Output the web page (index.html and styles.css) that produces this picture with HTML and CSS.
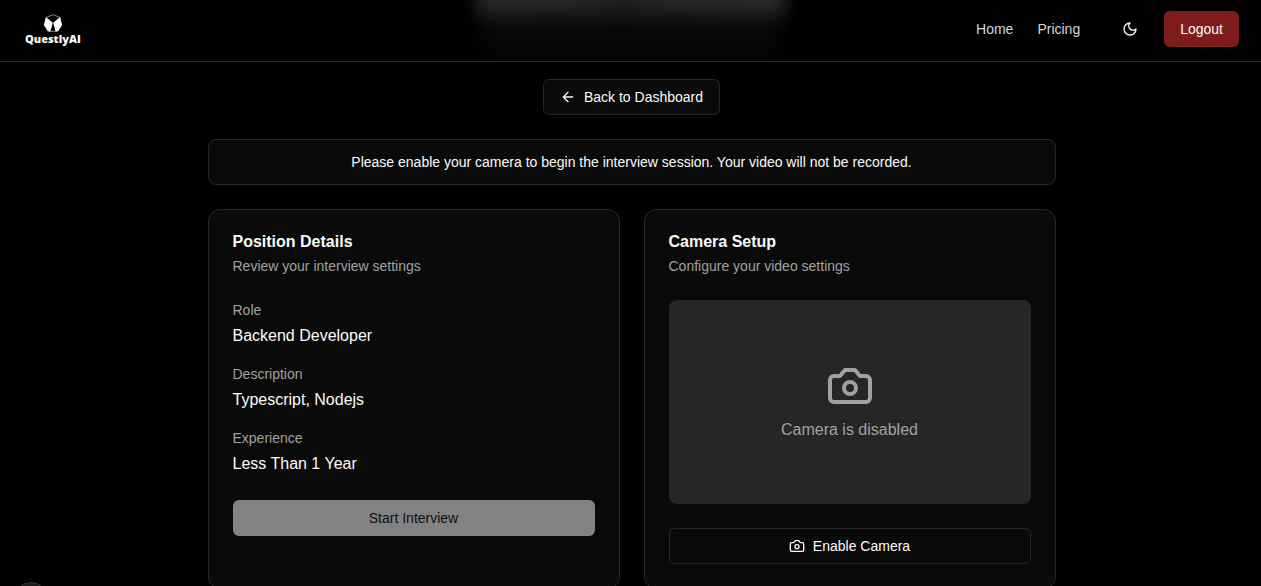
FILE: index.html
```html
<!DOCTYPE html>
<html lang="en">
<head>
<meta charset="utf-8">
<meta name="viewport" content="width=device-width, initial-scale=1">
<title>QuestlyAI</title>
<link rel="stylesheet" href="styles.css">
</head>
<body>
<header class="site-header">
  <div class="header-glow" aria-hidden="true"><span class="glow-strong"></span><span class="glow-faint"></span></div>
  <a class="logo" href="#">
    <svg class="logo-mark" viewBox="0 0 20 18" aria-hidden="true">
      <path d="M3 3.500 10 .6 17 3.500M6 17.300h8" fill="none" stroke="#aaa" stroke-width=".8"/>
      <path d="M2.800 3 9.800 8.800 7.400 17.400 4.800 17.200 .9 11Z" fill="#fff"/>
      <path d="M17.200 3 10.200 8.800 12.600 17.400 15.200 17.200 19.100 11Z" fill="#fff"/>
    </svg>
    <span class="logo-name">QuestlyAI</span>
  </a>
  <nav class="nav">
    <div class="nav-links">
      <a href="#">Home</a>
      <a href="#">Pricing</a>
    </div>
    <div class="nav-actions">
      <button class="theme-toggle" type="button" aria-label="Toggle theme">
        <svg class="icon" viewBox="0 0 24 24"><path d="M12 3a6 6 0 0 0 9 9 9 9 0 1 1-9-9Z"/></svg>
      </button>
      <button class="btn btn-danger" type="button">Logout</button>
    </div>
  </nav>
</header>
<main class="page">
  <a class="btn btn-back" href="#">
    <svg class="icon" viewBox="0 0 24 24" aria-hidden="true"><path d="m12 19-7-7 7-7M19 12H5"/></svg>
    Back to Dashboard
  </a>
  <p class="notice">Please enable your camera to begin the interview session. Your video will not be recorded.</p>
  <div class="cards">
    <section class="card">
      <div class="card-header">
        <h2>Position Details</h2>
        <p>Review your interview settings</p>
      </div>
      <dl class="details">
        <div><dt>Role</dt><dd>Backend Developer</dd></div>
        <div><dt>Description</dt><dd>Typescript, Nodejs</dd></div>
        <div><dt>Experience</dt><dd>Less Than 1 Year</dd></div>
      </dl>
      <button class="btn btn-primary" type="button" disabled>Start Interview</button>
    </section>
    <section class="card">
      <div class="card-header">
        <h2>Camera Setup</h2>
        <p>Configure your video settings</p>
      </div>
      <div class="preview">
        <svg class="icon icon-large" viewBox="0 0 24 24" aria-hidden="true"><path d="M14.5 4h-5L7 7H4a2 2 0 0 0-2 2v9a2 2 0 0 0 2 2h16a2 2 0 0 0 2-2V9a2 2 0 0 0-2-2h-3l-2.5-3z"/><circle cx="12" cy="13" r="3"/></svg>
        <p>Camera is disabled</p>
      </div>
      <button class="btn btn-outline" type="button">
        <svg class="icon" viewBox="0 0 24 24" aria-hidden="true"><path d="M14.5 4h-5L7 7H4a2 2 0 0 0-2 2v9a2 2 0 0 0 2 2h16a2 2 0 0 0 2-2V9a2 2 0 0 0-2-2h-3l-2.5-3z"/><circle cx="12" cy="13" r="3"/></svg>
        Enable Camera
      </button>
    </section>
  </div>
</main>
<button class="corner-button" type="button" aria-label="Open tools"></button>
</body>
</html>
```
FILE: styles.css
```css
*, *::before, *::after { box-sizing: border-box; }
body {
  margin: 0;
  background: #000;
  color: #fafafa;
  font-family: "Liberation Sans", Arial, sans-serif;
  font-size: 14px;
  line-height: 20px;
}
h2, p, dl, dd { margin: 0; }
a { color: inherit; text-decoration: none; }
button { font: inherit; color: inherit; }

.icon {
  width: 16px;
  height: 16px;
  flex: none;
  fill: none;
  stroke: currentColor;
  stroke-width: 2;
  stroke-linecap: round;
  stroke-linejoin: round;
}
.icon-large { width: 48px; height: 48px; }

.site-header {
  position: sticky;
  top: 0;
  z-index: 10;
  display: flex;
  align-items: center;
  justify-content: space-between;
  padding: 11px 22px 14px 25px;
  background: #000;
  border-bottom: 1px solid #1f2937;
}
.header-glow {
  position: absolute;
  inset: 0;
  overflow: hidden;
}
.glow-strong, .glow-faint {
  position: absolute;
  left: 50%;
  transform: translateX(-50%);
}
.glow-strong {
  top: -22px;
  width: 308px;
  height: 37px;
  background: linear-gradient(90deg, #292929, #262626 38%, #1e1e1e 46%, #262626 56%, #2b2b2b);
  filter: blur(9px);
}
.glow-faint {
  top: 0;
  width: 300px;
  height: 54px;
  z-index: -1;
  background: #080808;
  filter: blur(10px);
}

.logo {
  position: relative;
  display: flex;
  flex-direction: column;
  align-items: center;
}
.logo-mark { width: 20px; height: 18px; }
.logo-name {
  font-family: "Open Sans", "Noto Sans", sans-serif;
  font-size: 11px;
  font-weight: 800;
  line-height: 13px;
}

.nav { position: relative; display: flex; align-items: center; gap: 32px; }
.nav-links { display: flex; gap: 24px; color: #d1d5db; }
.nav-actions { display: flex; gap: 16px; }
.theme-toggle {
  display: grid;
  place-items: center;
  width: 36px;
  height: 36px;
  padding: 0;
  border: 0;
  background: none;
}

.btn {
  display: flex;
  align-items: center;
  justify-content: center;
  gap: 8px;
  padding: 7px 16px;
  border: 1px solid #262626;
  border-radius: 6px;
}
.btn-danger { padding: 8px 16px; border: 0; background: #7f1d1d; }
.btn-back { align-self: center; background: #0a0a0a; }
.btn-primary { padding: 8px 16px; border: 0; background: #828282; color: #111; }
.btn-outline { background: #0a0a0a; }

.page {
  display: flex;
  flex-direction: column;
  gap: 24px;
  max-width: 896px;
  margin: 0 auto;
  padding: 17px 23px 24px 25px;
}
.notice {
  padding: 12px 16px;
  border: 1px solid #262626;
  border-radius: 8px;
  background: #0a0a0a;
  text-align: center;
}
.cards { display: grid; grid-template-columns: 1fr 1fr; gap: 24px; }
.card {
  display: flex;
  flex-direction: column;
  justify-content: flex-start;
  gap: 24px;
  padding: 24px;
  border: 1px solid #262626;
  border-radius: 12px;
  background: #0a0a0a;
}
.card-header { display: grid; gap: 6px; color: #a1a1a1; }
.card-header h2 {
  color: #fafafa;
  font-size: 16px;
  font-weight: 600;
  line-height: 16px;
}
.details { display: grid; gap: 16px; }
.details dt { color: #a1a1a1; }
.details dd { margin-top: 4px; font-size: 16px; line-height: 24px; }
.preview {
  display: flex;
  flex-direction: column;
  align-items: center;
  justify-content: center;
  gap: 8px;
  aspect-ratio: 16 / 9;
  border-radius: 8px;
  background: #262626;
  color: #a1a1a1;
  font-size: 16px;
  line-height: 24px;
}
.corner-button {
  position: fixed;
  left: 15px;
  bottom: -28px;
  width: 32px;
  height: 32px;
  border: 1px solid #333;
  border-radius: 50%;
  background: #1c1c1c;
}
```
